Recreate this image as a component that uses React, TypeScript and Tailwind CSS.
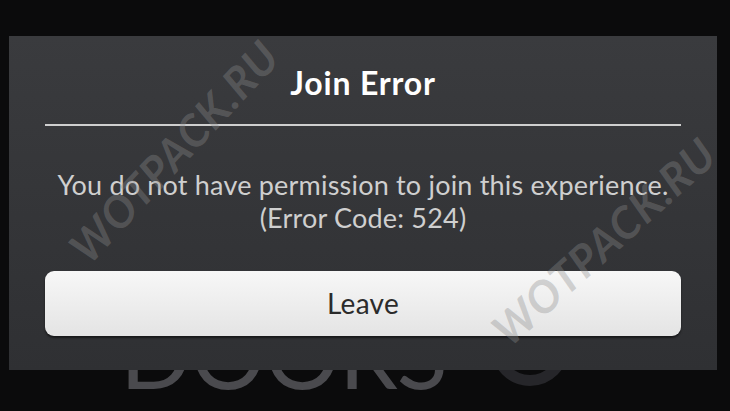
import React from 'react';

const font = { fontFamily: 'Lato, "Open Sans", sans-serif' };

const Watermark = ({ className }: { className: string }) => (
  <div
    className={`pointer-events-none absolute text-[44px] font-bold italic tracking-wide text-[rgba(140,140,140,0.36)] whitespace-nowrap ${className}`}
    style={font}
  >
    WOTPACK.RU
  </div>
);

const App = () => {
  return (
    <div className="relative w-[730px] h-[411px] overflow-hidden bg-[#0b0b0c]" style={font}>
      {/* game logo behind the modal */}
      <div className="flex items-end pt-[306px] pl-[120px] gap-[44px]">
        <span className="text-[94px] leading-none font-normal tracking-[-1px] text-[#4a4a4e]">DOORS</span>
        <div className="w-[78px] h-[78px] mb-[14px] rounded-full border-[11px] border-[#26262a]"></div>
      </div>

      {/* Join error modal */}
      <div className="absolute left-[9px] top-[36px] w-[708px] h-[334px] bg-gradient-to-b from-[#3a3b3e] to-[#2f3033] px-[36px] pt-[28px] pb-[34px] flex flex-col">
        <h1 className="text-center text-[32px] leading-[38px] font-bold tracking-[0.8px] text-white">Join Error</h1>
        <div className="mt-[22px] h-[2px] bg-[#cfcfcf]"></div>
        <p className="mt-[42px] text-center text-[27px] leading-[33px] text-[#cfcfcf] tracking-[0.2px]">
          You do not have permission to join this experience.
          <br />
          (Error Code: 524)
        </p>
        <button className="mt-[37px] h-[65px] w-full rounded-[9px] bg-gradient-to-b from-[#f7f7f7] to-[#e4e4e4] text-[28px] leading-[61px] tracking-[0.3px] text-[#2b2b2b] shadow-[0_2px_2px_rgba(0,0,0,0.5)]">
          Leave
        </button>
      </div>

      <Watermark className="left-[32px] top-[118px] -rotate-[47deg]" />
      <Watermark className="left-[462px] top-[208px] -rotate-[42deg]" />
    </div>
  );
};

export default App;
